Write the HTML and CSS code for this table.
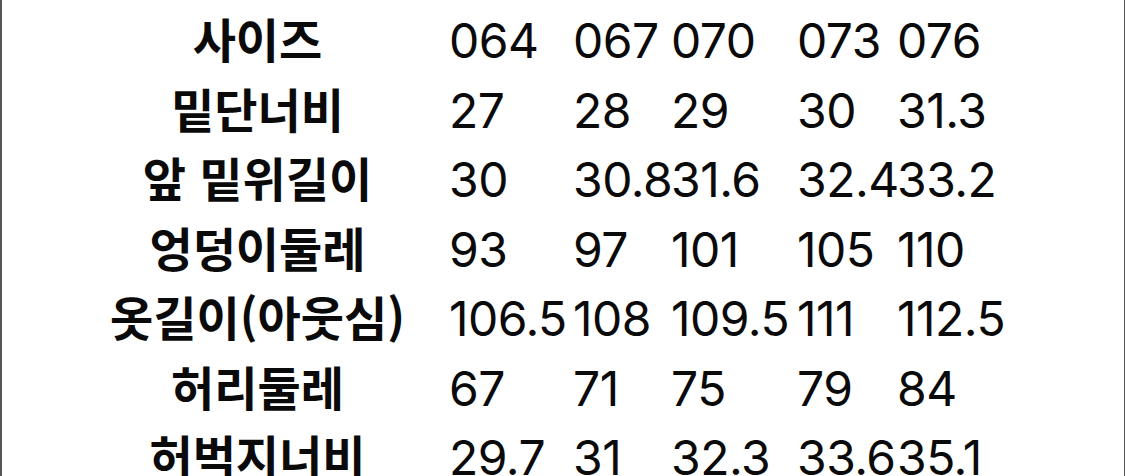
FILE: index.html
```html
<!DOCTYPE html>
<html lang="ko">
<head>
<meta charset="utf-8">
<link rel="stylesheet" href="styles.css">
</head>
<body>
<div class="frame">
  <div class="table">
    <div class="row"><div class="label">사이즈</div><div class="v">064</div><div class="v">067</div><div class="v">070</div><div class="v">073</div><div class="v">076</div></div>
    <div class="row"><div class="label">밑단너비</div><div class="v">27</div><div class="v">28</div><div class="v">29</div><div class="v">30</div><div class="v">31.3</div></div>
    <div class="row"><div class="label">앞 밑위길이</div><div class="v">30</div><div class="v">30.8</div><div class="v">31.6</div><div class="v">32.4</div><div class="v">33.2</div></div>
    <div class="row"><div class="label">엉덩이둘레</div><div class="v">93</div><div class="v">97</div><div class="v">101</div><div class="v">105</div><div class="v">110</div></div>
    <div class="row"><div class="label">옷길이(아웃심)</div><div class="v">106.5</div><div class="v">108</div><div class="v">109.5</div><div class="v">111</div><div class="v">112.5</div></div>
    <div class="row"><div class="label">허리둘레</div><div class="v">67</div><div class="v">71</div><div class="v">75</div><div class="v">79</div><div class="v">84</div></div>
    <div class="row"><div class="label">허벅지너비</div><div class="v">29.7</div><div class="v">31</div><div class="v">32.3</div><div class="v">33.6</div><div class="v">35.1</div></div>
  </div>
</div>
</body>
</html>
```

FILE: styles.css
```css
html, body {
  margin: 0;
  padding: 0;
  background: #ffffff;
}
.frame {
  box-sizing: border-box;
  width: 1125px;
  height: 476px;
  border-left: 2px solid #555555;
  border-right: 1px solid #555555;
  overflow: hidden;
  padding-top: 3px;
}
.table {
  display: flex;
  flex-direction: column;
}
.row {
  display: grid;
  grid-template-columns: 447px 124px 98px 126px 100px 1fr;
  height: 69.5px;
  align-items: baseline;
  white-space: nowrap;
}
.label {
  padding-left: 64px;
  text-align: center;
  font-family: "Noto Sans CJK KR", sans-serif;
  font-weight: 700;
  font-size: 47px;
  line-height: 69.5px;
  color: #0a0a0a;
}
.v {
  font-family: Inter, "Liberation Sans", sans-serif;
  font-size: 48px;
  line-height: 69.5px;
  color: #0a0a0a;
  letter-spacing: -0.5px;
}
```
